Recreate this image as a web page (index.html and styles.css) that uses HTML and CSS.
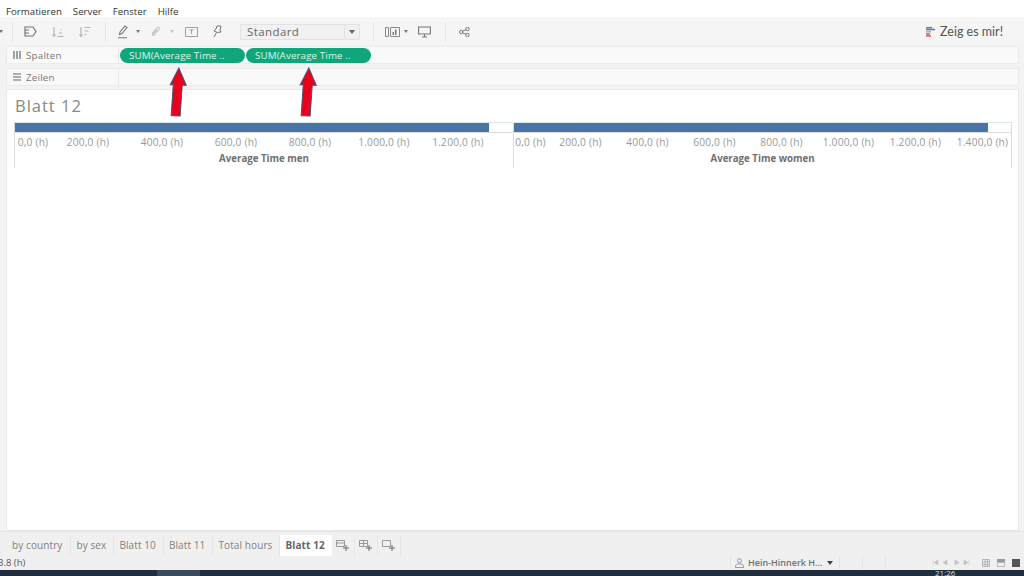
FILE: index.html
```html
<!DOCTYPE html>
<html lang="de">
<head>
  <meta charset="UTF-8">
  <title>Blatt 12</title>
  <link rel="stylesheet" href="styles.css">
</head>
<body>
  <nav class="menu">
    <span>Formatieren</span>
    <span>Server</span>
    <span>Fenster</span>
    <span>Hilfe</span>
  </nav>

  <div class="toolbar">
    <svg class="caret-sm edge" width="4" height="3" viewBox="0 0 4 3"><path d="M0 0h4L2 3z" fill="#777"/></svg>
    <i class="sep first"></i>
    <svg class="tool t-connect" width="15" height="13" viewBox="0 0 15 13"><path d="M2 2h8l3 4.500-3 4.500H2zM2 5h4M2 8h4" fill="none" stroke="#777" stroke-width="1.200"/></svg>
    <svg class="tool t-asc" width="14" height="12" viewBox="0 0 14 12"><path d="M3 1v9M1.500 8.500 3 10.500l1.500-2M6.500 10.500h6M8 7h3M9.500 3.500h1" fill="none" stroke="#b5b5b5" stroke-width="1.200"/></svg>
    <svg class="tool t-desc" width="14" height="12" viewBox="0 0 14 12"><path d="M3 1v9M1.500 8.500 3 10.500l1.500-2M6.500 1.500h6M6.500 5h4M6.500 8.500h2" fill="none" stroke="#b5b5b5" stroke-width="1.200"/></svg>
    <i class="sep second"></i>
    <svg class="tool t-pen" width="12" height="14" viewBox="0 0 12 14"><path d="M2.500 9.500 3 7l5-6 2 1.500-5 6zM1 12.700h9" fill="none" stroke="#777" stroke-width="1.100"/></svg>
    <svg class="caret-sm t-caret" width="4" height="3" viewBox="0 0 4 3"><path d="M0 0h4L2 3z" fill="#777"/></svg>
    <svg class="tool t-clip" width="11" height="12" viewBox="0 0 11 12"><path d="M2 7.500 7 2c1.500-1.500 3 .2 2 1.500L4 9c-1 1-2-.2-1.200-1L7 4" fill="none" stroke="#c4c4c4" stroke-width="1.100"/></svg>
    <svg class="caret-sm t-caret2" width="4" height="3" viewBox="0 0 4 3"><path d="M0 0h4L2 3z" fill="#c4c4c4"/></svg>
    <svg class="tool t-text" width="13" height="10" viewBox="0 0 13 10"><path d="M.5.500h12v9H.5zM4.500 3h4M6.500 3v4" fill="none" stroke="#999" stroke-width=".9"/></svg>
    <svg class="tool t-pin" width="10" height="13" viewBox="0 0 10 13"><path d="M5 1h4L8 5l1 2-3.500.5L2 6l2-2zM4.500 7.500 2 12" fill="none" stroke="#777" stroke-width="1"/></svg>
    <div class="select">
      <span class="select-text">Standard</span>
      <span class="select-arrow"><svg width="6" height="4" viewBox="0 0 6 4"><path d="M0 0h6L3 4z" fill="#666"/></svg></span>
    </div>
    <i class="sep third"></i>
    <svg class="tool t-show" width="15" height="10" viewBox="0 0 15 10"><path d="M.5.500h3v9h-3zM5.500.500h9v9h-9z" fill="none" stroke="#888"/><path d="M7.500 8V5h1.500v3zM10 8V2.500h1.500V8z" fill="#777"/></svg>
    <svg class="caret-sm t-caret3" width="4" height="3" viewBox="0 0 4 3"><path d="M0 0h4L2 3z" fill="#777"/></svg>
    <svg class="tool t-present" width="13" height="12" viewBox="0 0 13 12"><path d="M.6 1h11.800v7H.6zM6.500 8v3M4 11h5" fill="none" stroke="#777" stroke-width="1.100"/></svg>
    <i class="sep fourth"></i>
    <svg class="tool t-share" width="11" height="10" viewBox="0 0 11 10"><circle cx="2.200" cy="5" r="1.700" fill="none" stroke="#777"/><circle cx="8.500" cy="2" r="1.700" fill="none" stroke="#777"/><circle cx="8.500" cy="8" r="1.700" fill="none" stroke="#777"/><path d="M3.800 4.200 7 2.700M3.800 5.800 7 7.300" stroke="#777"/></svg>
    <div class="show-me">
      <svg width="10" height="10" viewBox="0 0 10 10"><path d="M0 .500h6M0 2.500h9" stroke="#4e79a7" stroke-width="1.400"/><path d="M0 4.800h5" stroke="#9aa8b8" stroke-width="1.400"/><path d="M0 7h4M0 9h5" stroke="#e15759" stroke-width="1.400"/></svg>
      <span>Zeig es mir!</span>
    </div>
  </div>

  <div class="shelves">
    <div class="shelf">
      <div class="shelf-label">
        <svg width="8" height="8" viewBox="0 0 8 8"><path d="M1 0v8M4 0v8M7 0v8" stroke="#666" stroke-width="1.200"/></svg>
        <span>Spalten</span>
      </div>
      <div class="shelf-pills">
        <span class="pill">SUM(Average Time ..</span>
        <span class="pill">SUM(Average Time ..</span>
      </div>
    </div>
    <div class="shelf">
      <div class="shelf-label">
        <svg width="8" height="8" viewBox="0 0 8 8"><path d="M0 1h8M0 4h8M0 7h8" stroke="#666" stroke-width="1.100"/></svg>
        <span>Zeilen</span>
      </div>
    </div>
  </div>

  <main class="view">
    <h1 class="sheet-title">Blatt 12</h1>
    <div class="chart">
      <section class="pane">
        <div class="bar-track"><div class="bar" style="width: 474px"></div></div>
        <div class="axis men">
          <span>0,0 (h)</span><span>200,0 (h)</span><span>400,0 (h)</span><span>600,0 (h)</span><span>800,0 (h)</span><span>1.000,0 (h)</span><span>1.200,0 (h)</span>
        </div>
        <div class="axis-title">Average Time men</div>
      </section>
      <section class="pane">
        <div class="bar-track"><div class="bar" style="width: 474px"></div></div>
        <div class="axis women">
          <span>0,0 (h)</span><span>200,0 (h)</span><span>400,0 (h)</span><span>600,0 (h)</span><span>800,0 (h)</span><span>1.000,0 (h)</span><span>1.200,0 (h)</span><span>1.400,0 (h)</span>
        </div>
        <div class="axis-title">Average Time women</div>
      </section>
    </div>
  </main>

  <!-- rote Pfeile liegen ueber dem Regal -->
  <svg class="arrow arrow-one" width="20" height="50" viewBox="0 0 20 50"><path d="M2 18 10 1l8 17h-4l-1 31H4l1-31z" fill="#e8001c" stroke="#46547c" stroke-width="1"/></svg>
  <svg class="arrow arrow-two" width="20" height="50" viewBox="0 0 20 50"><path d="M2 18 10 1l8 17h-4l-1 31H4l1-31z" fill="#e8001c" stroke="#46547c" stroke-width="1"/></svg>

  <div class="tabs">
    <span class="tab">by country</span>
    <span class="tab">by sex</span>
    <span class="tab">Blatt 10</span>
    <span class="tab">Blatt 11</span>
    <span class="tab">Total hours</span>
    <span class="tab active">Blatt 12</span>
    <span class="tab-new"><svg width="13" height="11" viewBox="0 0 13 11"><path d="M.5.500h8v6h-8zM.5 3h8" fill="none" stroke="#999"/><path d="M10 5v6M7 8h6" fill="none" stroke="#666"/></svg></span>
    <span class="tab-new"><svg width="13" height="11" viewBox="0 0 13 11"><path d="M.5.500h8v6h-8zM.5 3.500h8M4.500.500v6" fill="none" stroke="#999"/><path d="M10 5v6M7 8h6" fill="none" stroke="#666"/></svg></span>
    <span class="tab-new"><svg width="13" height="11" viewBox="0 0 13 11"><path d="M.5.500h8v6h-8z" fill="none" stroke="#999"/><path d="M10 5v6M7 8h6" fill="none" stroke="#666"/></svg></span>
  </div>

  <footer class="status">
    <span class="status-value">3.8 (h)</span>
    <div class="user">
      <svg width="9" height="10" viewBox="0 0 9 10"><circle cx="4.500" cy="2.700" r="2" fill="none" stroke="#999"/><path d="M.5 9.500V7.500l2-1.500h4l2 1.500v2z" fill="none" stroke="#999"/></svg>
      <span class="user-name">Hein-Hinnerk H...</span>
      <svg width="6" height="4" viewBox="0 0 6 4"><path d="M0 0h6L3 4z" fill="#444"/></svg>
    </div>
    <i class="status-cell"></i>
    <i class="status-cell"></i>
    <div class="pager">
      <svg width="38" height="5" viewBox="0 0 38 5"><path d="M1 0v5M6 0 2 2.500 6 5zM15 0l-4 2.500L15 5zM23 0l4 2.500L23 5zM32 0l4 2.500L32 5zM37 0v5" fill="#c4c4c4" stroke="#c4c4c4" stroke-width=".6"/></svg>
    </div>
    <div class="views">
      <svg width="8" height="8" viewBox="0 0 8 8"><path d="M.5.500h7v7h-7zM.5 3h7M.5 5.500h7M3 .500v7M5.500 .500v7" fill="none" stroke="#aaa" stroke-width=".8"/></svg>
      <svg width="8" height="8" viewBox="0 0 8 8"><path d="M0 0h8v3H0z" fill="#999"/><path d="M.5 3.500h7v4h-7z" fill="none" stroke="#aaa" stroke-width=".8"/></svg>
      <svg width="8" height="8" viewBox="0 0 8 8"><path d="M0 0h8v8H0z" fill="#555"/></svg>
    </div>
  </footer>

  <div class="taskbar">
    <span class="task-item"></span>
    <span class="clock">21:26</span>
  </div>
</body>
</html>
```

FILE: styles.css
```css
* {
  box-sizing: border-box;
}
body {
  margin: 0;
  width: 1024px;
  height: 576px;
  overflow: hidden;
  position: relative;
  display: flex;
  flex-direction: column;
  background: #f3f3f3;
  font-family: "Open Sans", Arial, sans-serif;
  color: #666;
}

.menu {
  height: 17px;
  flex: none;
  background: white;
  display: flex;
  align-items: center;
  gap: 11px;
  padding: 5px 0 0 6px;
  font-size: 9.7px;
  color: #333;
}

.toolbar {
  height: 27px;
  flex: none;
  padding-top: 2px;
  background: #f5f5f5;
  display: flex;
  align-items: center;
}
.toolbar svg {
  flex: none;
}
.sep {
  width: 1px;
  height: 20px;
  background: #e6e6e6;
  flex: none;
}
.edge { margin-left: -1px; }
.sep.first { margin-left: 9px; }
.t-connect { margin-left: 10px; }
.t-asc { margin-left: 13px; }
.t-desc { margin-left: 13px; }
.sep.second { margin-left: 13px; }
.t-pen { margin-left: 11px; }
.t-caret { margin-left: 7px; }
.t-clip { margin-left: 10px; }
.t-caret2 { margin-left: 9px; }
.t-text { margin-left: 11px; }
.t-pin { margin-left: 14px; }
.select {
  margin-left: 18px;
  width: 120px;
  height: 16px;
  flex: none;
  background: #f1f1f1;
  border: 1px solid #e2e2e2;
  display: flex;
  align-items: center;
  font-size: 11.5px;
}
.select-text {
  flex: 1;
  padding-left: 6px;
  letter-spacing: 0.4px;
}
.select-arrow {
  width: 15px;
  height: 100%;
  border-left: 1px solid #e2e2e2;
  display: flex;
  align-items: center;
  justify-content: center;
}
.sep.third { margin-left: 13px; }
.t-show { margin-left: 11px; }
.t-caret3 { margin-left: 4px; }
.t-present { margin-left: 10px; }
.sep.fourth { margin-left: 14px; }
.t-share { margin-left: 13px; }
.show-me {
  margin-left: auto;
  margin-right: 21px;
  display: flex;
  align-items: center;
  gap: 4px;
  font-family: Lato, sans-serif;
  font-size: 12.5px;
  color: #555;
}

.shelves {
  flex: none;
  padding: 2px 5px 0 6px;
  display: flex;
  flex-direction: column;
  gap: 4px;
}
.shelf {
  height: 18px;
  background: #f9f9f9;
  border: 1px solid #ebebeb;
  display: flex;
  align-items: center;
}
.shelf-label {
  width: 112px;
  height: 100%;
  flex: none;
  border-right: 1px solid #e6e6e6;
  display: flex;
  align-items: center;
  gap: 5px;
  padding-left: 6px;
  font-size: 9.8px;
  letter-spacing: 0.2px;
  color: #777;
}
.shelf-pills {
  display: flex;
  gap: 1px;
  padding-left: 1px;
}
.pill {
  width: 125px;
  height: 15px;
  line-height: 15px;
  padding-left: 9px;
  border-radius: 8px;
  background: #0fa77a;
  color: #dff3ea;
  font-size: 9.8px;
  letter-spacing: 0.1px;
  white-space: nowrap;
}

.view {
  flex: none;
  height: 442px;
  margin: 3px 5px 0 6px;
  padding: 0 6px 0 7px;
  background: white;
  border: 1px solid #e8e8e8;
}
.sheet-title {
  margin: 0;
  height: 32px;
  padding: 6px 0 0 1px;
  font-weight: 400;
  font-size: 16.5px;
  line-height: 20px;
  letter-spacing: 1px;
  color: #888;
}
.chart {
  display: flex;
  width: 998px;
  height: 46px;
}
.pane {
  width: 499px;
  height: 46px;
  border-left: 1px solid #dcdcdc;
}
.pane:last-child {
  border-right: 1px solid #dcdcdc;
}
.bar-track {
  height: 11px;
  border-top: 1px solid #dde8ee;
  border-bottom: 1px solid #dcdcdc;
}
.bar {
  height: 9px;
  background: #4a74a6;
}
.axis {
  display: flex;
  height: 18px;
  align-items: center;
  font-size: 10.2px;
  letter-spacing: 0.2px;
  color: #999;
  white-space: nowrap;
}
.axis span {
  text-align: center;
  flex: none;
}
.axis.men span { width: 74px; }
.axis.men span:first-child { width: 36px; }
.axis.women span { width: 67px; }
.axis.women span:first-child { width: 33px; }
.axis-title {
  padding-top: 2px;
  text-align: center;
  font-size: 9.7px;
  font-weight: 700;
  line-height: 12px;
  color: #707070;
}

.arrow {
  position: absolute;
  top: 67px;
}
.arrow-one {
  left: 168px;
  transform: rotate(2deg);
}
.arrow-two {
  left: 298px;
  transform: rotate(2deg);
}

.tabs {
  flex: none;
  height: 25px;
  display: flex;
  align-items: flex-end;
  padding-left: 7px;
  border-top: 1px solid #e6e6e6;
  background: #f0f0f0;
  font-size: 10px;
  letter-spacing: 0.1px;
  color: #808080;
}
.tab {
  height: 21px;
  line-height: 21px;
  padding: 0 7px 0 5px;
  border-right: 1px solid #e6e6e6;
}
.tab:first-child {
  padding-right: 8px;
}
.tab.active {
  background: white;
  font-weight: 700;
  color: #666;
  border-right: none;
}
.tab-new {
  width: 23px;
  height: 21px;
  border-right: 1px solid #e6e6e6;
  display: flex;
  align-items: center;
  justify-content: center;
}

.status {
  flex: none;
  height: 14px;
  padding-bottom: 1px;
  display: flex;
  align-items: center;
  background: #f0f0f0;
  font-size: 9.5px;
  color: #555;
}
.status-value {
  margin-left: -2px;
}
.user {
  margin-left: auto;
  width: 110px;
  height: 100%;
  display: flex;
  align-items: center;
  gap: 4px;
  padding-left: 4px;
  border-left: 1px solid #e3e3e3;
  border-right: 1px solid #e3e3e3;
  font-size: 9px;
  font-weight: 600;
  color: #707070;
}
.user-name {
  width: 75px;
  white-space: nowrap;
}
.status-cell {
  width: 23px;
  height: 100%;
  border-right: 1px solid #e3e3e3;
}
.pager {
  width: 90px;
  height: 100%;
  display: flex;
  align-items: center;
  justify-content: flex-end;
  padding-right: 6px;
}
.views {
  width: 48px;
  height: 100%;
  display: flex;
  align-items: center;
  justify-content: space-between;
  padding: 0 4px 0 6px;
}

.taskbar {
  flex: none;
  height: 6px;
  display: flex;
  background: #1f2d3d;
  overflow: hidden;
}
.task-item {
  width: 43px;
  margin-left: 157px;
  background: #3a4a5c;
}
.clock {
  margin-left: 735px;
  margin-top: -2px;
  font-size: 8px;
  line-height: 10px;
  color: #dde;
}
```
